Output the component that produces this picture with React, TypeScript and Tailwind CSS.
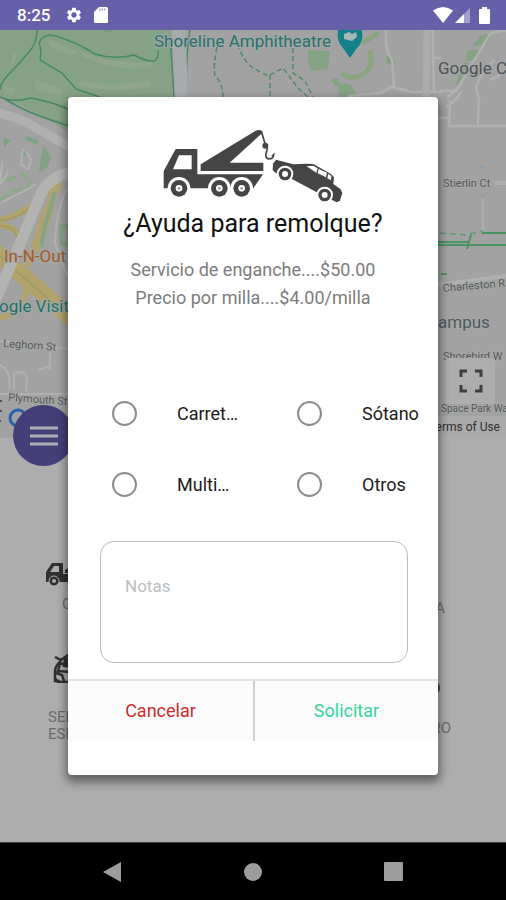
import React, { useState } from 'react';
import { MdSettings } from 'react-icons/md';

const services = ['Carret…', 'Sótano', 'Multi…', 'Otros'];

function StatusBar() {
  return (
    <header className="flex h-[30px] shrink-0 items-center bg-[#6660a9] pl-[17px] pr-4 text-white">
      <span className="text-[17px] font-medium leading-5">8:25</span>
      <MdSettings className="ml-[15px]" size={18} />
      <svg className="ml-[11px]" width="14" height="16" viewBox="0 0 14 16" fill="currentColor">
        <path d="M5 0h7.5Q14 0 14 1.500v13Q14 16 12.500 16h-11Q0 16 0 14.500V5z" />
        <path d="M5 2.500h7" stroke="#aaa6d2" strokeWidth="2" strokeDasharray="1.500 1" />
      </svg>
      <div className="ml-auto flex items-center">
        <svg width="20" height="16" viewBox="0 0 20 16" fill="currentColor">
          <path d="M0 3.500Q10-3.500 20 3.500L10 16z" />
        </svg>
        <svg className="ml-0.5" width="15" height="15" viewBox="0 0 15 15" fill="currentColor">
          <path d="M15 0v15H0z" opacity=".4" />
          <path d="M9 6v9H0z" />
        </svg>
        <svg className="ml-[9px]" width="11" height="17" viewBox="0 0 11 17" fill="currentColor">
          <path d="M3 0h5v2h2q1 0 1 1v13q0 1-1 1H1q-1 0-1-1V3q0-1 1-1h2z" />
        </svg>
      </div>
    </header>
  );
}

function MapView() {
  return (
    <svg className="block h-full w-full" viewBox="0 30 506 408" preserveAspectRatio="xMidYMid slice" fill="none">
      <path fill="#a1a2a1" d="M0 30h506v408H0z" />

      {/* park */}
      <path fill="#85a286" d="M0 30h171l3 110H80Q35 108 0 98z" />
      <path fill="#8fa68b" d="M48 41q8-1 17 6l14 5-8 3-20-7zM82 52q35 14 70 10v5q-30 6-70-10zM78 81q35 6 72-1l-1 7q-34 6-70-1zM35 80l28 9-3 6-24-5zM3 86l12 2-3 7-7-1zM12 55l5-3-1 8-6 9z" />
      <path fill="#799b7b" d="M101 30h14q-7 4-14 0z" />
      <g stroke="#468962" strokeWidth="1.500">
        <path d="M37 30q0 10-5 18Q22 61 8 75 0 84 0 90M40 60q2-11-1-17 4-10 17-7 22 7 39 18 19 6 39 1 13 7 20 6 5-2 4-11M40 60l22 13 14 16 24 8M171 48l3 50M190 30q-5 30-3 68" />
        <path d="M0 97q12 6 31 1 25 5 39 12M5 99q23 15 65 27" />
      </g>
      <path stroke="#a8abae" strokeWidth="13" d="M179 30l3 80" />
      <g stroke="#518a69" strokeWidth="1.500" strokeDasharray="5 3">
        <path d="M217 47q-4 18-2 29 8 7 8 21M238 44q4 16 15 24l15 8 15-8 15 20 10 9M293 48v25l12 8 8 16M270 75v22" />
      </g>
      <path fill="#84a383" d="M308 50l22 1-2 18-16 2-4-9zM331 80l6-2 4 6-5 3zM338 86l7-3 7 3 4 7-5 4h-12zM386 56l7 1 2 8-8-1zM480 36l13-3-7 12-13 1zM468 51l13-2-7 11-9 1z" />
      <path stroke="#8ba581" strokeWidth="5" d="M370 50q5 17-8 25-12 6-20-2M362 43l17-10" />
      <path stroke="#84a383" strokeWidth="5" d="M466 63l-8 22" />

      {/* streets, north */}
      <g stroke="#b0b0b1" strokeWidth="2.500">
        <path d="M386 30q-1 23 6 29l2 26-13 8-33 3M392 87l20 5h30M433 30v27l1 34M433 58h8M440 91h16l10-17 24-40q10-4 16-3M447 97q5-2 15-14M446 107q11-7 15-15M494 60q-15 15-18 28l3 12q-1 17-1 27M450 100l-1 26h57M490 80l16-8M438 118h10" />
      </g>
      <path stroke="#abacae" strokeWidth="7" d="M427 30l-1 68" />

      {/* west side */}
      <path stroke="#b0b0b1" strokeWidth="9" d="M-2 113q23 5 38 15l34 19" />
      <path fill="#80a182" d="M26 136l12 4-1 5-12-6zM44 146l7 12-4 10-8 4 2-16zM3 138l8 2-7 7zM21 151l6-2 1 8-5-2zM26 166l4 5-4 1z" />
      <path stroke="#8baa88" strokeWidth="3" strokeDasharray="11 3" d="M6 181l17-7 8 7-5 7q-13 1-27 13" />
      <path stroke="#b1b1b1" strokeWidth="2" d="M2 163l-2 22M23 148l-2 16 7 6 3-10-6-10M8 172q-5 10-9 11M36 184q-11 7-34 18" />
      <g stroke="#b2a36c" strokeWidth="6">
        <path d="M-3 220q22-2 45-23l18-14-15 30-17 53M-3 225q25 2 23 20l-9 17M-3 318q17-2 22-10 11-17 6-30" />
        <path strokeWidth="17" d="M-4 252l75 66" />
        <path strokeWidth="6" d="M-4 248l75 62M53 200q-4 19-17 50" />
      </g>
      <path stroke="#9d925f" strokeWidth="1" d="M-4 253l75 66M-4 226q17-1 21 10t-6 22M1 221q19-2 40-21" />
      <path stroke="#b3b3b2" strokeWidth="11" d="M72 172q-24 5-32 24l-21 50-24 55" />
      <path stroke="#85a485" strokeWidth="4" d="M55 192q-4 17-10 33l-4 22M61 226h8v18h-8z" />
      <path stroke="#b0b0b0" strokeWidth="2" d="M66 190q-10 22-11 53l13 34M0 341l69 8M50 352v18M38 370l13-4M14 390v-16q11-6 13 5l-1 12M0 365q12 6 9 24M0 394h69" />

      {/* east side */}
      <path stroke="#b0b0b0" strokeWidth="4" d="M495 183h11M438 285l68-9" />
      <path stroke="#acacac" strokeWidth="2" d="M483 198v35" />
      <path stroke="#489462" strokeWidth="2" d="M438 245h68M438 242h30M471 235l-4 14M482 233h24M441 274h6" />
      <path stroke="#5b9b70" strokeWidth="1.500" strokeDasharray="6 4" d="M440 233l26 2 17-4" />
      <path stroke="#839eb4" strokeWidth="1.500" d="M480 167h4M481 196h4" />

      {/* labels */}
      <g fontFamily="Roboto, sans-serif" stroke="#a6a8a6" strokeWidth="2" paintOrder="stroke">
        <g fontSize="17">
          <text x="154" y="47" fill="#24716d">Shoreline Amphitheatre</text>
          <text x="438" y="74" fill="#4a5056">Google C</text>
          <text x="4" y="262" fill="#a35a24">In-N-Out</text>
          <text x="-1" y="312" fill="#24716d">ogle Visit</text>
          <text x="438" y="328" fill="#4e5860">ampus</text>
        </g>
        <g fontSize="11" fill="#55585a">
          <text x="443" y="187">Stierlin Ct</text>
          <text x="443" y="292" transform="rotate(-5 443 292)">Charleston R</text>
          <text x="3" y="347" transform="rotate(4 3 347)">Leghorn St</text>
          <text x="8" y="401" transform="rotate(4 8 401)">Plymouth St</text>
          <text x="443" y="360">Shorebird W</text>
        </g>
        <text x="441" y="412" fontSize="10" fill="#55585a">Space Park Wa</text>
      </g>
      <path stroke="#4f5252" strokeWidth="2" d="M0 401h2M0 411h2M0 421h1" />
      <path fill="#14808a" d="M338 30h24q2 12-5 18l-7 10-7-10q-7-7-5-18z" />
      <path fill="#a6b7b7" d="M344 34l5-2 3 2 4-2 1 5-5 4-8-2z" />
      <circle cx="18" cy="418" r="8" stroke="#2763ad" strokeWidth="3" />
    </svg>
  );
}

function TowIcon() {
  return (
    <svg className="mx-auto block" width="180" height="74" viewBox="40 25 540 222" fill="#454545">
      <path fillRule="evenodd" d="M42 203v-52l36-66h65v76h197l-29 42zM88 104l-18 42h56v-42z" />
      <path d="M153 151v-20L318 30q10-5 20 1l-1 7-97 88h101v25z" />
      <path fill="none" stroke="#454545" strokeWidth="5" d="M335 32l12 40 6 12-4 15" />
      <circle cx="347" cy="75" r="9" />
      <path fill="none" stroke="#454545" strokeWidth="5" d="M349 98q-3 15 9 17 13 0 14-13l-5 5" />
      {[88, 209, 276].map((x) => (
        <g key={x}>
          <circle cx={x} cy="203" r="34" fill="#fff" />
          <circle cx={x} cy="203" r="25" />
          <circle cx={x} cy="203" r="10" fill="#fff" />
          <circle cx={x} cy="203" r="4" fill="#999" />
        </g>
      ))}
      <path d="M369 148l1-19 9-12 52 14 40-2 20 1 53 30 9 10-2 20 22 16 5 11-7 23-10 5-50-25-84-45-50-19z" />
      <path fill="#fff" d="M471 137l19-2 14 8-4 13zM507 145l25 11-3 14-25-12zM536 159l9 7-1 13-11-6z" />
      {[[406, 160], [525, 223]].map(([x, y]) => (
        <g key={x}>
          <circle cx={x} cy={y} r="25" fill="#fff" />
          <circle cx={x} cy={y} r="19" />
          <circle cx={x} cy={y} r="9" fill="#fff" />
        </g>
      ))}
    </svg>
  );
}

function ServiceMenu() {
  return (
    <section className="flex flex-1 justify-between pl-[46px] pr-[55px] pt-[124px] text-[15px] leading-[17px] text-[#6b6b6b]">
      <div>
        <svg width="40" height="24" viewBox="0 0 40 24" fill="#303030">
          <path fillRule="evenodd" d="M0 20V10L6 1h11v11h23v8zM4 10h9V4H8z" />
          <path d="M19 11V8l14-8v11z" />
          <circle cx="8" cy="19" r="5" stroke="#adadad" />
          <circle cx="8" cy="19" r="2" fill="#adadad" />
        </svg>
        <p className="ml-4 mt-[10px]">G</p>
        <svg className="ml-[7px] mt-10" width="30" height="30" viewBox="0 0 30 30" fill="none" stroke="#303030" strokeWidth="2.500">
          <path d="M2 4l6 3L18 0M7 6v5l10-1M7 9q-5 4-5 10v6l3 4h13M7 11l-2 7 13 1M3 20l6 2 2 6M2 22v6h5" />
          <path fill="#303030" d="M12 7l8-4v11l-9-1z" />
        </svg>
        <p className="ml-0.5 mt-[26px]">
          SER
          <br />
          ESP
        </p>
      </div>
      <div className="text-right">
        <p className="mr-1.5 mt-[38px]">A</p>
        <svg className="ml-auto mr-[11px] mt-[65px]" width="6" height="12" viewBox="0 0 6 12" fill="#484848">
          <path d="M0 0q6 0 6 6t-6 6z" />
        </svg>
        <p className="mt-[26px]">RO</p>
      </div>
    </section>
  );
}

function TowDialog() {
  const [selected, setSelected] = useState('');
  const [notes, setNotes] = useState('');

  return (
    <div
      role="dialog"
      aria-labelledby="tow-title"
      className="w-full rounded bg-white pb-[34px] pt-8 shadow-[0_5px_10px_2px_rgba(0,0,0,0.45)]"
    >
      <TowIcon />
      <h1 id="tow-title" className="mt-px text-center text-[25px] leading-10 text-[#111]">
        ¿Ayuda para remolque?
      </h1>
      <p className="mt-3 text-center text-lg leading-7 text-[#7c7c7c]">
        Servicio de enganche....$50.00
        <br />
        Precio por milla....$4.00/milla
      </p>

      <div className="mt-[66px] grid grid-cols-2 text-lg text-[#1c1c1c]">
        {services.map((name) => (
          <label key={name} className="flex h-[71px] items-center gap-10 whitespace-nowrap pl-11">
            <input
              type="radio"
              name="service"
              value={name}
              checked={selected === name}
              onChange={() => setSelected(name)}
              className="size-[25px] shrink-0 appearance-none rounded-full border-2 border-[#8c8c8c] checked:border-8"
            />
            {name}
          </label>
        ))}
      </div>

      <div className="ml-8 mr-[30px] mt-[21px]">
        <textarea
          aria-label="Notas"
          placeholder="Notas"
          value={notes}
          onChange={(e) => setNotes(e.target.value)}
          className="block h-[122px] w-full resize-none rounded-[14px] border border-[#bcbcbc] px-6 py-8 text-[17px] leading-6 placeholder:text-[#bdbdbd]"
        />
      </div>

      <div className="mt-4 grid grid-cols-2 border-t-2 border-[#e3e3e3] bg-[#fcfcfc] text-lg">
        <button type="button" className="h-[60px] text-[#cf2a2e]">
          Cancelar
        </button>
        <button type="button" className="h-[60px] border-l-2 border-[#d0d0d0] text-[#35d69a]">
          Solicitar
        </button>
      </div>
    </div>
  );
}

function NavBar() {
  return (
    <nav className="flex h-[58px] shrink-0 items-center justify-center gap-[120px] border-t border-[#444] bg-black text-[#9d9d9d]">
      <button type="button" aria-label="Atrás">
        <svg width="20" height="20" viewBox="0 0 20 20" fill="currentColor">
          <path d="M18 0v20L0 10z" />
        </svg>
      </button>
      <button type="button" aria-label="Inicio">
        <svg width="20" height="20" viewBox="0 0 20 20" fill="currentColor">
          <circle cx="10" cy="10" r="9" />
        </svg>
      </button>
      <button type="button" aria-label="Recientes">
        <svg width="20" height="20" viewBox="0 0 20 20" fill="currentColor">
          <rect width="19" height="19" x="1" rx="1" />
        </svg>
      </button>
    </nav>
  );
}

export default function App() {
  return (
    <div className="flex min-h-screen flex-col font-['Roboto',sans-serif]">
      <StatusBar />
      <main className="relative flex flex-1 flex-col overflow-hidden bg-[#adadad]">
        <div className="relative h-[408px]">
          <MapView />
          <button
            type="button"
            aria-label="Pantalla completa"
            className="absolute bottom-[34px] right-[11px] flex h-[46px] w-[49px] items-center justify-center bg-[#adadad]"
          >
            <svg width="24" height="24" viewBox="0 0 24 24" fill="none" stroke="#3e3e3e" strokeWidth="3">
              <path d="M2 8V2h6M16 2h6v6M22 16v6h-6M8 22H2v-6" />
            </svg>
          </button>
          <a
            href="#terms"
            className="absolute bottom-0 right-0 bg-[#aaaaaa] pr-1.5 text-xs leading-[22px] text-[#303030]"
          >
            Terms of Use
          </a>
        </div>
        <ServiceMenu />
        <button
          type="button"
          aria-label="Menú"
          className="absolute left-[13px] top-[375px] flex size-[61px] items-center justify-center rounded-full bg-[#453f79]"
        >
          <svg width="28" height="20" viewBox="0 0 28 20" stroke="#b0b0b4" strokeWidth="3">
            <path d="M0 2h28M0 10h28M0 18h28" />
          </svg>
        </button>
        <div className="absolute inset-0 flex items-center px-[68px]">
          <TowDialog />
        </div>
      </main>
      <NavBar />
    </div>
  );
}
